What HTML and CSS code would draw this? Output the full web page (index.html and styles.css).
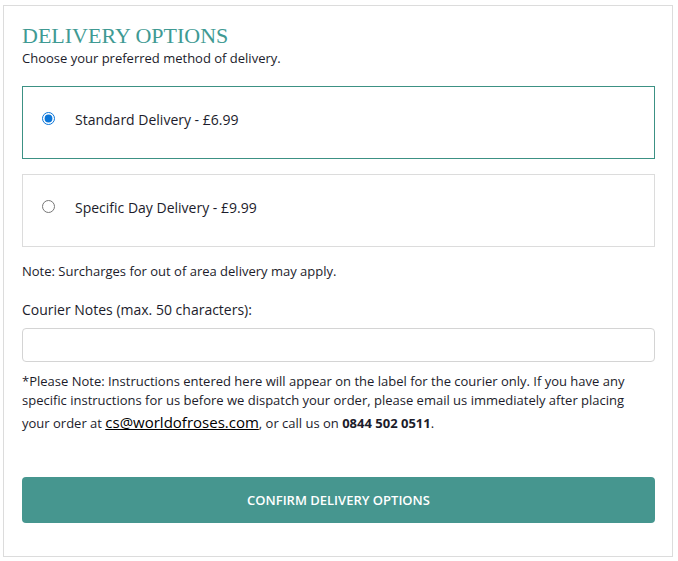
FILE: index.html
```html
<!DOCTYPE html>
<html lang="en">
<head>
<meta charset="utf-8">
<title>Delivery Options</title>
<link rel="stylesheet" href="styles.css">
</head>
<body>
<div class="panel">
  <h2 class="title">DELIVERY OPTIONS</h2>
  <p class="subtitle">Choose your preferred method of delivery.</p>

  <label class="option option-selected">
    <input type="radio" name="delivery" class="radio" checked>
    <span class="option-text">Standard Delivery - £6.99</span>
  </label>
  <label class="option">
    <input type="radio" name="delivery" class="radio">
    <span class="option-text">Specific Day Delivery - £9.99</span>
  </label>

  <p class="note">Note: Surcharges for out of area delivery may apply.</p>

  <label class="notes-label" for="notes">Courier Notes (max. 50 characters):</label>
  <input id="notes" class="notes-input" type="text" maxlength="50">

  <p class="info">*Please Note: Instructions entered here will appear on the label for the courier only. If you have any specific instructions for us before we dispatch your order, please email us immediately after placing your order at <a class="email" href="#">cs@worldofroses.com</a>, or call us on <strong>0844 502 0511</strong>.</p>

  <button class="confirm" type="button">CONFIRM DELIVERY OPTIONS</button>
</div>
</body>
</html>
```
FILE: styles.css
```css
html, body {
  margin: 0;
  padding: 0;
  background: #fff;
}
body {
  font-family: "Open Sans", "Liberation Sans", sans-serif;
  color: #1c1c2b;
}
.panel {
  margin: 5px 5px 4px 3px;
  border: 1px solid #dcdcdc;
  padding: 18px 17px 33px 18px;
  display: flex;
  flex-direction: column;
}
.title {
  font-family: "Liberation Serif", "Times New Roman", serif;
  font-weight: normal;
  font-size: 22px;
  line-height: 26px;
  color: #3f9a93;
  margin: -1px 0 0;
}
.subtitle {
  font-size: 13px;
  line-height: 18px;
  margin: 0 0 19px;
}
.option {
  box-sizing: border-box;
  display: flex;
  align-items: center;
  height: 73px;
  border: 1px solid #dcdcdc;
  padding: 0 0 8px 19px;
  margin-bottom: 15px;
  cursor: pointer;
}
.option-selected {
  border-color: #3c9184;
}
.radio {
  margin: 0;
  width: 13px;
  height: 13px;
  accent-color: #0a75d8;
}
.option-text {
  font-size: 14px;
  margin-left: 20px;
  position: relative;
  top: 1px;
}
.note {
  font-size: 13px;
  line-height: 18px;
  margin: 0 0 20px;
}
.notes-label {
  font-size: 14px;
  line-height: 20px;
  margin-bottom: 8px;
}
.notes-input {
  box-sizing: border-box;
  height: 34px;
  border: 1px solid #d4d4d4;
  border-radius: 4px;
  margin: 0 0 10px;
  font: inherit;
}
.info {
  font-size: 13px;
  line-height: 19px;
  margin: 0 0 42px;
}
.email {
  color: #000;
  font-size: 15px;
  line-height: 25px;
  text-decoration: underline;
}
.info strong {
  font-weight: bold;
}
.confirm {
  height: 46px;
  border: none;
  border-radius: 4px;
  background: #46968f;
  color: #fff;
  font-family: "Open Sans", "Liberation Sans", sans-serif;
  font-weight: 600;
  font-size: 13px;
}
```
